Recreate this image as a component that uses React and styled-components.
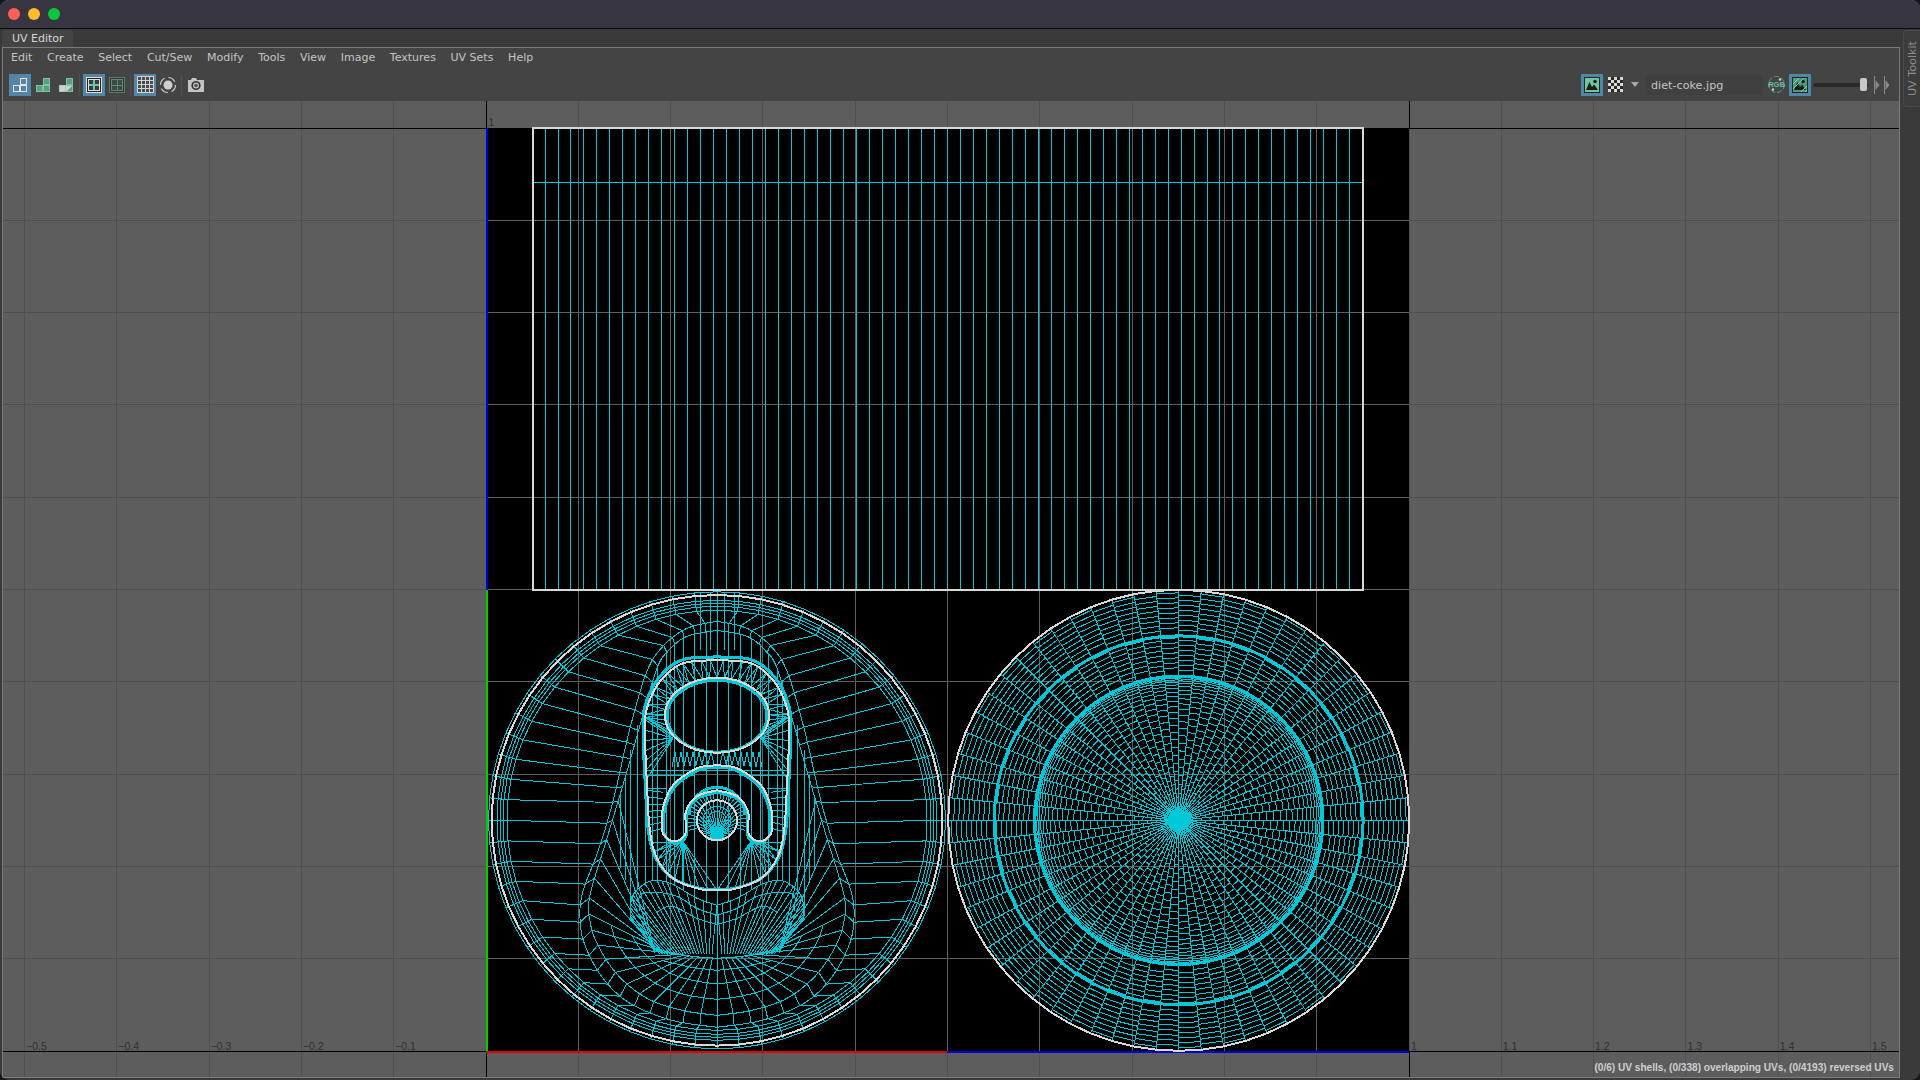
import React from 'react';
import styled, { createGlobalStyle } from 'styled-components';

const GlobalStyle = createGlobalStyle`
  html, body { margin: 0; padding: 0; background: #17161a; overflow: hidden; }
  #root { width: 1920px; height: 1080px; }
  * { box-sizing: border-box; }
`;

const UI_FONT = `"DejaVu Sans", "Liberation Sans", sans-serif`;
const SMALL_FONT = `"Liberation Sans", Arial, sans-serif`;

const Window = styled.div`
  width: 1920px;
  height: 1080px;
  display: flex;
  flex-direction: column;
  background: #3a3a3a;
  border-radius: 9px;
  overflow: hidden;
  font-family: ${UI_FONT};
  box-shadow: inset 0 1px 0 #77757d;
`;

const TitleBar = styled.div`
  height: 29px;
  flex: none;
  display: flex;
  align-items: center;
  gap: 8px;
  padding: 0 0 1px 8px;
  background: #37353f;
  border-bottom: 1px solid #0c0c0c;
`;

const Light = styled.span`
  width: 12px;
  height: 12px;
  border-radius: 50%;
  background: ${(p) => p.$color};
`;

const Body = styled.div`
  flex: 1;
  display: flex;
  min-height: 0;
`;

const Main = styled.div`
  flex: 1;
  min-width: 0;
  display: flex;
  flex-direction: column;
  padding: 1px 0 2px 2px;
`;

const TabRow = styled.div`
  height: 17px;
  flex: none;
  display: flex;
`;

const Tab = styled.div`
  width: 71px;
  display: flex;
  align-items: center;
  padding: 0 0 1px 10px;
  background: #444444;
  border-radius: 3px 3px 0 0;
  color: #d6d6d6;
  font-size: 11px;
`;

const Panel = styled.div`
  flex: 1;
  min-height: 0;
  display: flex;
  flex-direction: column;
  border: 1px solid #7c7c7c;
  background: #444444;
`;

const MenuBar = styled.div`
  height: 22px;
  flex: none;
  display: flex;
  align-items: center;
  gap: 14.7px;
  padding: 0 0 3px 8px;
`;

const MenuItem = styled.span`
  color: #c4c4c4;
  font-size: 11px;
`;

const ToolBar = styled.div`
  height: 31px;
  flex: none;
  display: flex;
  align-items: center;
  padding: 0 9px 2px 6px;
`;

const ToolGroup = styled.div`
  display: flex;
  gap: 1px;
  align-items: center;
`;

const ToolButton = styled.div`
  width: ${(p) => p.$w || 22}px;
  height: 22px;
  flex: none;
  display: flex;
  align-items: center;
  justify-content: center;
  margin-left: ${(p) => p.$gap || 0}px;
  background: ${(p) => (p.$on ? '#5285a6' : 'transparent')};
`;

const Separator = styled.span`
  width: 1px;
  height: 22px;
  margin: 0 3px 0 2px;
  background: #505050;
`;

const RightTools = styled.div`
  margin-left: auto;
  display: flex;
  align-items: center;
`;

const Caret = styled.div`
  display: flex;
  margin-left: 5px;
`;

const FileName = styled.div`
  width: 117px;
  height: 20px;
  margin: 0 2px 0 7px;
  padding: 1px 0 0 5px;
  display: flex;
  align-items: center;
  background: #404040;
  border-radius: 2px;
  color: #c4c4c4;
  font-size: 11.2px;
`;

const Slider = styled.div`
  position: relative;
  width: 55px;
  height: 4px;
  margin: 0 6px 0 2px;
  background: #2a2a2a;
  border-radius: 2px;
`;

const SliderHandle = styled.span`
  position: absolute;
  right: 1px;
  top: -5px;
  width: 7px;
  height: 13px;
  background: #c8c8c8;
  border-radius: 2px;
`;

const Viewport = styled.div`
  position: relative;
  flex: 1;
  min-height: 0;
  background: #5d5d5d;
`;

const Canvas = styled.svg`
  display: block;
  width: 100%;
  height: 100%;
`;

const StatusText = styled.span`
  position: absolute;
  right: 5px;
  bottom: 4px;
  color: #cfcfcf;
  font-family: ${SMALL_FONT};
  font-size: 10.1px;
  font-weight: 700;
  white-space: nowrap;
`;

const Dock = styled.div`
  width: 20px;
  flex: none;
  padding: 1px 0 0 3px;
`;

const DockTab = styled.div`
  height: 77px;
  display: flex;
  align-items: center;
  justify-content: center;
  border: 1px solid #4a4a4a;
  border-right: 0;
  border-radius: 4px 0 0 4px;
  background: #3c3c3c;
`;

const DockLabel = styled.span`
  writing-mode: vertical-rl;
  transform: rotate(180deg);
  color: #8c8c8c;
  font-size: 11.2px;
`;

// ---- mesh helpers ----
const f = (n) => n.toFixed(1);
const polyD = (pts, close) =>
  'M' + pts.map((p) => `${f(p[0])} ${f(p[1])}`).join('L') + (close ? 'Z' : '');
const mirror = (pts) => pts.map(([x, y]) => [-x, y]);

const smooth = (c, steps = 8) => {
  const out = [];
  for (let i = 0; i < c.length - 1; i++) {
    const p0 = c[Math.max(i - 1, 0)];
    const p1 = c[i];
    const p2 = c[i + 1];
    const p3 = c[Math.min(i + 2, c.length - 1)];
    for (let k = 0; k < steps; k++) {
      const t = k / steps;
      const q = (a, b, d, e) =>
        0.5 * (2 * b + (d - a) * t + (2 * a - 5 * b + 4 * d - e) * t * t + (3 * b - a - 3 * d + e) * t * t * t);
      out.push([q(p0[0], p1[0], p2[0], p3[0]), q(p0[1], p1[1], p2[1], p3[1])]);
    }
  }
  out.push(c[c.length - 1]);
  return out;
};

// walk along a polyline, one point per fraction of its length
const resample = (pts, fracs) => {
  const acc = [0];
  for (let i = 1; i < pts.length; i++) {
    acc.push(acc[i - 1] + Math.hypot(pts[i][0] - pts[i - 1][0], pts[i][1] - pts[i - 1][1]));
  }
  const total = acc[acc.length - 1];
  let j = 0;
  return fracs.map((fr) => {
    const s = total * fr;
    while (j < pts.length - 2 && acc[j + 1] < s) j++;
    const t = (s - acc[j]) / (acc[j + 1] - acc[j] || 1);
    return [pts[j][0] + (pts[j + 1][0] - pts[j][0]) * t, pts[j][1] + (pts[j + 1][1] - pts[j][1]) * t];
  });
};
const evenly = (n) => Array.from({ length: n + 1 }, (_, i) => i / n);

const circleD = (r, n = 64, offset = 0) => {
  const pts = [];
  for (let i = 0; i < n; i++) {
    const a = offset + (i / n) * Math.PI * 2;
    pts.push([r * Math.cos(a), r * Math.sin(a)]);
  }
  return polyD(pts, true);
};

// ---- flat disc on the right ----
const buildDisc = () => {
  const d = [];
  const N = 64;
  const ang = (i) => (i / N) * Math.PI * 2;
  const chord = (i, r) => {
    const a = ang(i);
    const b = ang(i + 1);
    d.push(`M${f(r * Math.cos(a))} ${f(r * Math.sin(a))}L${f(r * Math.cos(b))} ${f(r * Math.sin(b))}`);
  };
  const radii = [];
  for (let r = 225; r > 186; r -= 5) radii.push(r);
  for (let r = 180; r > 146; r -= 5) radii.push(r);
  for (let i = 0; i < N; i++) {
    const a = ang(i);
    d.push(`M0 0L${f(230 * Math.cos(a))} ${f(230 * Math.sin(a))}`);
    const shift = i % 2 ? 2.5 : 0;
    radii.forEach((r) => chord(i, r + shift));
    for (let k = 1; k < 25; k++) {
      const base = 144 * Math.sin((k / 25) * (Math.PI / 2));
      const step = 144 * Math.sin(((k + 1) / 25) * (Math.PI / 2)) - base;
      chord(i, base + (i % 2 ? step / 2 : 0));
    }
  }
  return d.join('');
};

// ---- can lid on the left ----
const T1 = [[0,-199],[-30,-192],[-54,-174],[-70,-149],[-87,-92],[-104,-19],[-119,31],[-134,71],[-137,98],[-132,125],[-114,158],[-87,183],[-45,200],[0,207]];
const T2 = [[0,-190],[-30,-184],[-48,-170],[-60,-152],[-77,-95],[-90,-49],[-110,18],[-127,75],[-127,101],[-119,125],[-99,155],[-70,178],[-35,190],[0,195]];
const TAB = [[0,-160],[-34,-157],[-57,-139],[-70,-112],[-72,-85],[-70,-35],[-67,11],[-60,38],[-44,58],[-20,68],[0,70]];
const SHOE = [[0,-55],[-20,-52],[-44,-35],[-54,-12],[-55,8],[-52,16],[-44,21],[-35,18],[-31,10],[-31,-9],[-20,-24],[0,-30]];
const LOBE_A = [[-87,98],[-84,75],[-67,61],[-47,63],[-20,78],[0,85]];
const LOBE_B = [[-77,91],[-77,75],[-62,72],[-40,76],[-20,88],[0,95]];
const LOBE_C = [[-60,92],[-45,86],[-20,98],[0,104]];
const NECK_A = [[-56,130],[-25,136],[0,138]];
const NECK_B = [[-56,140],[-25,147],[0,150]];

// which point of the teardrop each rim spoke lands on
const WARP = [[0, 0], [5, 0.111], [10, 0.276], [15, 0.419], [20, 0.618], [32, 1]];
const warpFracs = () =>
  Array.from({ length: 33 }, (_, i) => {
    let k = 0;
    while (k < WARP.length - 2 && WARP[k + 1][0] < i) k++;
    const [a, fa] = WARP[k];
    const [b, fb] = WARP[k + 1];
    return fa + ((i - a) / (b - a)) * (fb - fa);
  });

const yAt = (pts, x, from = 0) => {
  let best = pts[from];
  pts.slice(from).forEach((p) => {
    if (Math.abs(p[0] - x) < Math.abs(best[0] - x)) best = p;
  });
  return best[1];
};

const buildLid = () => {
  const d = [];
  const seg = (x1, y1, x2, y2) => {
    d.push(`M${f(x1)} ${f(y1)}L${f(x2)} ${f(y2)}M${f(-x1)} ${f(y1)}L${f(-x2)} ${f(y2)}`);
  };
  const both = (pts) => {
    d.push(polyD(pts));
    d.push(polyD(mirror(pts)));
  };
  [228.5, 220, 217, 214, 210].forEach((r) => d.push(circleD(r)));

  const t1 = resample(smooth(T1), warpFracs());
  const t2 = resample(smooth(T2), warpFracs());
  both(smooth(T1));
  both(smooth(T2));

  const rim = (r, i) => {
    const a = (i / 32) * Math.PI;
    return [-r * Math.sin(a), -r * Math.cos(a)];
  };
  const neck = (i) => {
    const u = Math.min(1.15, (32 - i) / 12);
    return [-54 * u, 132 + 6 * (1 - Math.min(1, u))];
  };
  for (let i = 0; i <= 32; i++) {
    const a = rim(228.5, i);
    const b = rim(210, i);
    seg(a[0], a[1], b[0], b[1]);
    seg(b[0], b[1], t1[i][0], t1[i][1]);
    seg(t1[i][0], t1[i][1], t2[i][0], t2[i][1]);
    if (i >= 15) {
      const n = neck(i);
      seg(t2[i][0], t2[i][1], n[0], n[1]);
    }
  }
  // cross arcs in the lower fan
  [0.45, 0.72].forEach((t) => {
    const pts = [];
    for (let i = 21; i <= 32; i++) {
      const n = neck(i);
      pts.push([n[0] + (t2[i][0] - n[0]) * t, n[1] + (t2[i][1] - n[1]) * t]);
    }
    both(pts);
  });

  // lobes and the slanted bundles under the tab
  const lobeA = smooth(LOBE_A);
  [LOBE_A, LOBE_B, LOBE_C, NECK_A, NECK_B].forEach((c) => both(smooth(c)));
  for (let k = 0; k <= 20; k++) {
    const t = Math.pow(k / 20, 1.5);
    const top = lobeA[Math.round(t * (lobeA.length - 1))];
    seg(top[0], top[1], -57 + 52 * (k / 20), 134);
  }

  // verticals through the middle
  d.push('M0 -228.5L0 229');
  const archT2 = smooth(T2).slice(0, 40);
  [11, 23, 34, 43, 51, 60, 65].forEach((x) => {
    seg(-x, yAt(archT2, -x), -x, yAt(lobeA, -x, 14));
  });
  [[72, -112, 66], [80, -95, 70], [87, -70, 96], [92, -45, 60], [97, -25, 48]].forEach(([x, a, b]) => {
    seg(-x, a, -x, b);
  });
  [[7, -170], [17, -170]].forEach(([x, a]) => seg(-x, -228, -x, a));

  // rungs across the tab
  seg(-70, -50, 0, -50);
  seg(-70, -45, -22, -45);
  seg(-70, -32, -50, -32);

  // zigzag between hole and tab outline
  const tab = smooth(TAB);
  const holeY = -105;
  const toward = (a) => {
    let best = tab[0];
    let bd = 9;
    tab.forEach((p) => {
      const q = Math.atan2(p[1] - holeY, p[0]);
      let dd = Math.abs(q - a);
      if (dd > Math.PI) dd = Math.PI * 2 - dd;
      if (dd < bd) {
        bd = dd;
        best = p;
      }
    });
    return best;
  };
  for (let k = 0; k <= 16; k++) {
    const a = -Math.PI / 2 - (k / 16) * (Math.PI * 0.72);
    const b = a - (Math.PI * 0.72) / 16;
    const hx = 52 * Math.cos(a);
    const hy = holeY + 37.5 * Math.sin(a);
    const p = toward(a);
    const q = toward(b);
    seg(hx, hy, p[0], p[1]);
    seg(hx, hy, q[0], q[1]);
  }
  // fan from the lower sides of the hole to the shoulder of the tab
  for (let k = 0; k <= 6; k++) {
    seg(-44, -82, -71, -100 + k * 10);
  }
  for (let k = 0; k <= 6; k++) {
    const x = -6 - k * 6;
    seg(x, -68, x - 3, -56 + k * 0.5);
    seg(x, -68, x + 3, -56 + k * 0.5);
  }
  // tab sides down past the shoe
  for (let k = 0; k <= 6; k++) {
    seg(-70, -30 + k * 7, -54, -28 + k * 6);
  }

  // spokes between the small circle and the inner arch
  for (let k = 0; k <= 14; k++) {
    const a = -Math.PI / 2 - (k / 14) * (Math.PI * 0.62);
    seg(20 * Math.cos(a), 20 * Math.sin(a), 30 * Math.cos(a), -1 + 30 * Math.sin(a));
  }
  // band of the shoe
  [[-11, -53, -30], [-23, -50, -24], [-34, -44, -14], [-43, -35, 14]].forEach(([x, a, b]) => seg(x, a, x, b));

  // fan inside the small circle
  for (let k = 0; k <= 15; k++) {
    const a = (k / 15) * Math.PI - Math.PI / 2;
    seg(0, 14, 20 * Math.cos(a), 20 * Math.sin(a));
  }
  d.push(circleD(9, 32, 0));
  d.push(circleD(14, 32, 0));

  // fans under the shoe
  const low = resample(tab.slice(tab.length - 30), evenly(10));
  low.forEach((p, i) => {
    seg(-34, 21, p[0], p[1]);
    if (i < 5) seg(-46, 22, p[0], p[1]);
  });
  seg(0, 20, 0, 70);
  return d.join('');
};

const DISC_D = buildDisc();
const LID_D = buildLid();
const TAB_PTS = smooth([...TAB, ...mirror(TAB).reverse().slice(1)]);
const SHOE_PTS = smooth(SHOE);
const RECT_LINES = Array.from({ length: 63 }, (_, i) => 532 + (i + 1) * 12.98);

const GRID = 92.3;
const gridXs = Array.from({ length: 21 }, (_, i) => 486 + (i - 5) * GRID);
const gridYs = Array.from({ length: 11 }, (_, i) => 128 + i * GRID);
const RULER = [
  ['−0.5', 0], ['−0.4', 1], ['−0.3', 2], ['−0.2', 3], ['−0.1', 4],
  ['1.1', 16], ['1.2', 17], ['1.3', 18], ['1.4', 19], ['1.5', 20],
];

const CYAN = '#00c8d8';
const WHITE = '#d8d8d8';

const UvCanvas = () => (
  <Canvas viewBox="3 101 1896 976">
    <rect x="486" y="128" width="923" height="923" fill="#000" />
    <g shapeRendering="crispEdges" fill="none">
      {gridXs.map((x) => {
        const inside = x > 486 && x < 1409;
        return (
          <React.Fragment key={x}>
            <path d={`M${f(x)} 101V128M${f(x)} 1051V1077`} stroke="#505050" />
            <path d={`M${f(x)} 128V1051`} stroke={inside ? '#5f5f5f' : '#505050'} />
          </React.Fragment>
        );
      })}
      {gridYs.slice(1, 10).map((y) => (
        <React.Fragment key={y}>
          <path d={`M3 ${f(y)}H486M1409 ${f(y)}H1899`} stroke="#505050" />
          <path d={`M486 ${f(y)}H1409`} stroke="#5f5f5f" />
        </React.Fragment>
      ))}
      <path d="M3 128.5H1899M3 1051.5H1899M486.5 101V128M486.5 1051V1077M1409.5 101V128M1409.5 1051V1077" stroke="#000" />
      <path d="M487 128V590" stroke="#0000e0" strokeWidth="2" />
      <path d="M487 590V1051" stroke="#00d000" strokeWidth="2" />
      <path d="M486 1051.5H947" stroke="#e80000" strokeWidth="2" />
      <path d="M947 1051.5H1409" stroke="#0000e0" strokeWidth="2" />

      <path d={`${RECT_LINES.map((x) => `M${f(x)} 129V589`).join('')}M533 182.5H1362`} stroke={CYAN} />
      <rect x="532.5" y="128" width="830" height="462" stroke={WHITE} strokeWidth="2" />

      <g transform="translate(717 820.3)">
        <path d={LID_D} stroke={CYAN} />
        <path d={polyD(TAB_PTS, true)} stroke={CYAN} strokeWidth="3" transform="translate(0 -1.5) scale(1.025 1.012)" />
        <path d={polyD(TAB_PTS, true)} stroke={WHITE} strokeWidth="2" />
        <ellipse cx="0" cy="-104" rx="50" ry="36" stroke={CYAN} strokeWidth="3" />
        <ellipse cx="0" cy="-105" rx="52" ry="37.5" stroke={WHITE} strokeWidth="2" />
        <path d={polyD(SHOE_PTS)} stroke={CYAN} strokeWidth="3" transform="translate(0 2) scale(0.97 1)" />
        <path d={polyD(mirror(SHOE_PTS))} stroke={CYAN} strokeWidth="3" transform="translate(0 2) scale(0.97 1)" />
        <path d="M-28 -6C-28 -20 -15 -33 0 -33C15 -33 28 -20 28 -6" stroke={CYAN} strokeWidth="3" />
        <path d={polyD(SHOE_PTS)} stroke={WHITE} strokeWidth="2" />
        <path d={polyD(mirror(SHOE_PTS))} stroke={WHITE} strokeWidth="2" />
        <path d="M0 8L-7 17L0 20L7 17Z" fill={CYAN} stroke={CYAN} />
        <circle cx="0" cy="0" r="20" stroke={WHITE} strokeWidth="2" />
        <path d={circleD(225.3)} stroke={WHITE} strokeWidth="2" />
      </g>

      <g transform="translate(1178.7 820.3)">
        <path d={DISC_D} stroke={CYAN} />
        <path d={circleD(184.5)} stroke={CYAN} strokeWidth="3" />
        <path d={circleD(144.3)} stroke={CYAN} strokeWidth="3" />
        <path d="M-15 0Q-4 -4 0 -15Q4 -4 15 0Q4 4 0 15Q-4 4 -15 0Z" fill={CYAN} stroke={CYAN} />
        <path d={circleD(230.5)} stroke={WHITE} strokeWidth="2" />
      </g>
    </g>
    <g fontFamily={SMALL_FONT} fontSize="10.5" fill="#303030">
      {RULER.map(([label, i]) => (
        <text key={label} x={f(gridXs[i] + 1.5)} y="1049.5">
          {label}
        </text>
      ))}
      <text x="488.5" y="126">1</text>
      <text x="1411" y="1049.5">1</text>
    </g>
  </Canvas>
);

// ---- toolbar icons ----
const Tile = ({ x, y, s = 6, fill, stroke }) => (
  <rect x={x + 0.5} y={y + 0.5} width={s} height={s} fill={fill} stroke={stroke} />
);

const ShellIcon = ({ mode }) => {
  const on = mode === 'all';
  const fill = on ? '#5285a6' : '#5a9e82';
  const line = on ? '#e4e4e4' : '#7fc4a2';
  return (
    <svg width="16" height="16" viewBox="0 0 16 16">
      <rect x="8.5" y="1" width="6.5" height="14" fill="#222" opacity={on ? 1 : 0.35} />
      <rect x="1" y="8.5" width="14" height="6.5" fill="#222" opacity={on ? 1 : 0.35} />
      <Tile x={8} y={1} s={6} fill={fill} stroke={line} />
      <Tile x={1} y={8} s={6} fill={fill} stroke={line} />
      <Tile x={8} y={8} s={6} fill={mode === 'part' ? '#d0d0d0' : fill} stroke={line} />
      {mode === 'part' && <path d="M8 8V14H14Z" fill="#d0d0d0" />}
      {mode === 'part' && <path d="M9 14L14 9V14Z" fill="#5a9e82" />}
      {mode === 'part' && <rect x="1.5" y="8.5" width="6" height="6" fill="#d0d0d0" />}
    </svg>
  );
};

const FrameIcon = ({ dim }) => (
  <svg width="18" height="18" viewBox="0 0 18 18" fill="none" shapeRendering="crispEdges">
    <rect x="1.5" y="1.5" width="15" height="15" fill={dim ? '#333' : '#222'} stroke={dim ? '#5c7a6c' : '#e0e0e0'} />
    <rect x="3.5" y="3.5" width="11" height="11" fill={dim ? '#384a42' : '#3a3a3a'} stroke={dim ? '#5f8a78' : '#e0e0e0'} />
    <path d="M9 4V14M4 9H14" stroke={dim ? '#5f8a78' : '#66c7a2'} strokeWidth={dim ? 1 : 2} />
  </svg>
);

const GridIcon = () => (
  <svg width="17" height="17" viewBox="0 0 17 17" fill="#4a4a4a" stroke="#d4d4d4" shapeRendering="crispEdges">
    <rect x="0.5" y="0.5" width="16" height="16" />
    <path d="M4.5 1V16M8.5 1V16M12.5 1V16M1 4.5H16M1 8.5H16M1 12.5H16" />
  </svg>
);

const SoftIcon = () => (
  <svg width="18" height="18" viewBox="0 0 18 18" fill="none">
    <circle cx="9" cy="9" r="7.5" stroke="#c8c8c8" strokeDasharray="8 3.8" strokeWidth="1.2" />
    <circle cx="9" cy="9" r="4.5" fill="#d0d0d0" />
  </svg>
);

const CameraIcon = () => (
  <svg width="16" height="14" viewBox="0 0 16 14">
    <path d="M0 2H3L4 0H8L9 2H16V14H0Z" fill="#c4c4c4" />
    <circle cx="8" cy="7.5" r="4.6" fill="#333" />
    <circle cx="8" cy="7.5" r="3" fill="#c4c4c4" />
    <circle cx="8" cy="7.5" r="1.8" fill="#555" />
  </svg>
);

const PictureIcon = ({ striped }) => (
  <svg width="16" height="16" viewBox="0 0 16 16">
    <rect width="16" height="16" fill="#1e2a26" />
    <rect x="1" y="1" width="14" height="14" fill={striped ? '#4f9a78' : '#6cc79f'} />
    <circle cx="11" cy="4.5" r="1.8" fill="#1d1d1d" />
    <path d="M2 13L5.5 5L8 10L10 7.5L14 13Z" fill="#1d1d1d" />
    {striped && <path d="M1 7L7 1M1 12L12 1M9 15L15 9M13 15L15 13" stroke="#7fd3ab" strokeWidth="1" />}
  </svg>
);

const CheckerIcon = () => (
  <svg width="15" height="15" viewBox="0 0 15 15" shapeRendering="crispEdges">
    <rect width="15" height="15" fill="#2a2a2a" />
    {Array.from({ length: 25 }, (_, i) =>
      ((i % 5) + Math.floor(i / 5)) % 2 === 0 ? (
        <rect key={i} x={(i % 5) * 3} y={Math.floor(i / 5) * 3} width="3" height="3" fill="#d8d8d8" />
      ) : null
    )}
  </svg>
);

const CaretIcon = () => (
  <svg width="8" height="5" viewBox="0 0 8 5">
    <path d="M0 0H8L4 5Z" fill="#a8a8a8" />
  </svg>
);

const RgbIcon = () => (
  <svg width="19" height="19" viewBox="0 0 19 19" fill="none">
    <circle cx="9.5" cy="9.5" r="8" stroke="#5a9e82" strokeDasharray="5 2" />
    <text x="9.5" y="12" textAnchor="middle" fontFamily={SMALL_FONT} fontSize="7.5" fontWeight="700" fill="#66c7a2">
      RGB
    </text>
    <circle cx="6" cy="14.5" r="1.2" fill="#d0d0d0" />
    <circle cx="13" cy="4.5" r="1.2" fill="#d0d0d0" />
  </svg>
);

const StepIcon = () => (
  <svg width="6" height="18" viewBox="0 0 6 18" fill="#8a8a8a">
    <rect width="1" height="18" />
    <path d="M1.5 4L5.5 9L1.5 14Z" />
  </svg>
);

const MENU = ['Edit', 'Create', 'Select', 'Cut/Sew', 'Modify', 'Tools', 'View', 'Image', 'Textures', 'UV Sets', 'Help'];

export default function App() {
  return (
    <Window>
      <GlobalStyle />
      <TitleBar>
        <Light $color="#ff5f57" />
        <Light $color="#febc2e" />
        <Light $color="#0ac83f" />
      </TitleBar>
      <Body>
        <Main>
          <TabRow>
            <Tab>UV Editor</Tab>
          </TabRow>
          <Panel>
            <MenuBar>
              {MENU.map((m) => (
                <MenuItem key={m}>{m}</MenuItem>
              ))}
            </MenuBar>
            <ToolBar>
              <ToolGroup>
                <ToolButton $on><ShellIcon mode="all" /></ToolButton>
                <ToolButton><ShellIcon mode="green" /></ToolButton>
                <ToolButton><ShellIcon mode="part" /></ToolButton>
              </ToolGroup>
              <Separator />
              <ToolGroup>
                <ToolButton $on><FrameIcon /></ToolButton>
                <ToolButton><FrameIcon dim /></ToolButton>
              </ToolGroup>
              <Separator />
              <ToolGroup>
                <ToolButton $on><GridIcon /></ToolButton>
                <ToolButton><SoftIcon /></ToolButton>
              </ToolGroup>
              <Separator />
              <ToolButton><CameraIcon /></ToolButton>
              <RightTools>
                <ToolButton $on><PictureIcon /></ToolButton>
                <ToolButton $gap={1}><CheckerIcon /></ToolButton>
                <Caret><CaretIcon /></Caret>
                <FileName>diet-coke.jpg</FileName>
                <ToolButton><RgbIcon /></ToolButton>
                <ToolButton $on $gap={2}><PictureIcon striped /></ToolButton>
                <Slider><SliderHandle /></Slider>
                <ToolButton $w={6}><StepIcon /></ToolButton>
                <ToolButton $w={6} $gap={4}><StepIcon /></ToolButton>
              </RightTools>
            </ToolBar>
            <Viewport>
              <UvCanvas />
              <StatusText>(0/6) UV shells, (0/338) overlapping UVs, (0/4193) reversed UVs</StatusText>
            </Viewport>
          </Panel>
        </Main>
        <Dock>
          <DockTab>
            <DockLabel>UV Toolkit</DockLabel>
          </DockTab>
        </Dock>
      </Body>
    </Window>
  );
}
